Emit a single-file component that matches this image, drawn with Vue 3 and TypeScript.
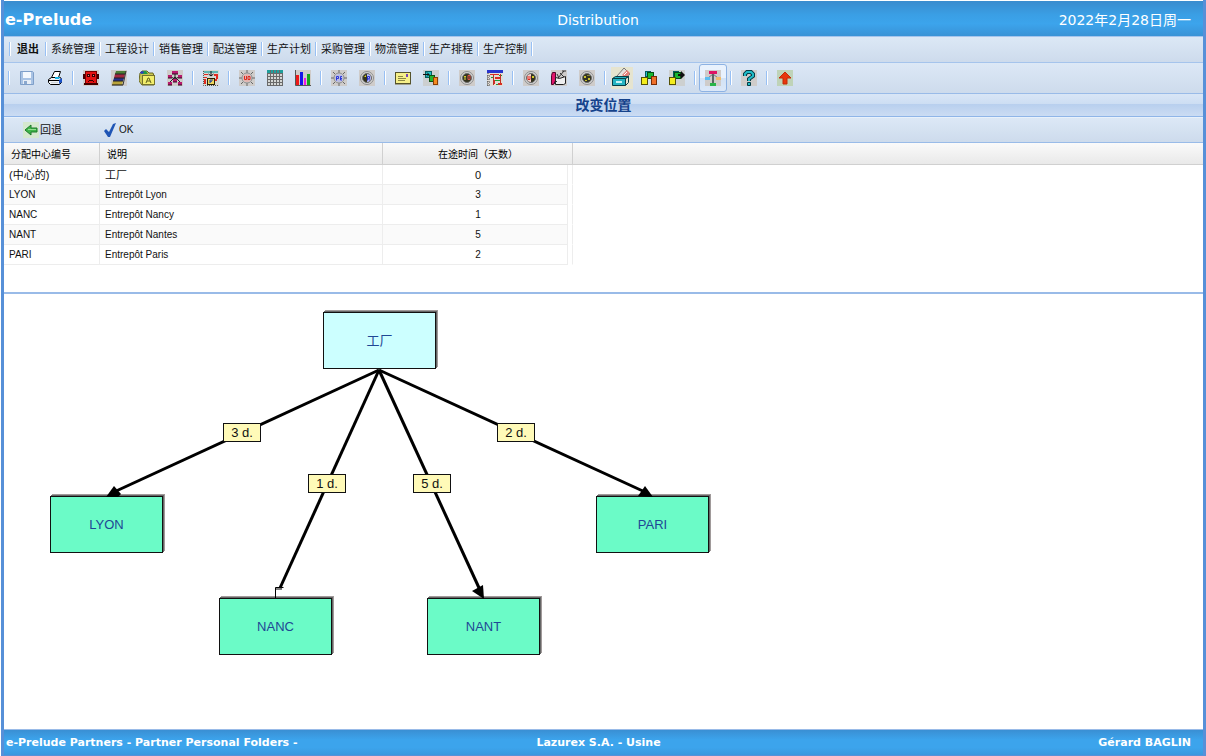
<script setup lang="ts">
interface Tool {
  name: string
  label: string
  art: string
  large?: boolean
  active?: boolean
}

interface Row {
  code: string
  label: string
  days: number
  lang: 'zh' | 'fr'
}

interface Site {
  code: string
  x: number
  y: number
  root?: boolean
}

interface Delay {
  text: string
  x: number
  y: number
}

const menus: string[] = ['退出', '系统管理', '工程设计', '销售管理', '配送管理', '生产计划', '采购管理', '物流管理', '生产排程', '生产控制']

const plate = '<rect width="16" height="16" fill="#cfccca"/>'
const gear = (inner: string): string =>
  plate +
  '<path d="M8 0v3M8 13v3M0 8h3M13 8h3M2 2l2 2M12 12l2 2M14 2l-2 2M4 12l-2 2" stroke="#666"/>' +
  '<circle cx="8" cy="8" r="5" fill="#dcdcdc" stroke="#8a8a8a"/>' + inner
const dial = (inner: string): string =>
  plate +
  '<circle cx="8" cy="8" r="6.500" fill="#d4d4d4" stroke="#8d8d8d"/><circle cx="8" cy="8" r="4.500" fill="#33331f" stroke="#6c6c6c"/>' +
  inner

const groups: Tool[][] = [
  [
    {
      name: 'save', label: '保存',
      art: '<path d="M1.500 1.500h12l1 1v12h-13z" fill="#a9c3e4" stroke="#7f9fc9"/><rect x="4" y="2" width="8" height="6" fill="#f4f8fd"/><rect x="4" y="10" width="8" height="4" fill="#e8eef6"/><rect x="5" y="11" width="3" height="3" fill="#8ba8ce"/>',
    },
    {
      name: 'print', label: '打印',
      art: '<path d="M4.500 7.500l3-6h6l-2 6z" fill="#fff" stroke="#000"/><path d="M1.500 9.500l3-2h9l1 2v3l-2 2h-9l-2-2z" fill="#eef1f4" stroke="#000"/><path d="M2 10.500h10" stroke="#000"/><path d="M4 12h7v1H4z" fill="#cfd6dc"/><path d="M8 7h5l-1 2H8z" fill="#19b6e8"/><path d="M12 10l3-2v4l-3 2z" fill="#1650c8"/>',
    },
  ],
  [
    {
      name: 'machine', label: '设备',
      art: plate + '<rect x="2.500" y="1.500" width="11" height="12" fill="#e31212" stroke="#700"/><path d="M0 4h2v5H0zM14 4h2v5h-2zM1 13h14v2H1z" fill="#400"/><path d="M4 4h3v3H4zM9 4h3v3H9zM6 10h4v1H6zM5 11h1v1H5zM10 11h1v1h-1z" fill="#3a0000"/><path d="M5 5h1v1H5zM10 5h1v1h-1z" fill="#e88"/>',
    },
    {
      name: 'books', label: '目录',
      art: plate + '<path d="M5 1h10l-1 3H4z" fill="#4b7d35"/><path d="M4 4h10l-1 4H3z" fill="#a32640"/><path d="M3 8h10l-1 3H2z" fill="#26318d"/><path d="M2 11h10l-1 4H1z" fill="#b9a33a"/><path d="M4 4h10M3 8h10M2 11h10" stroke="#222"/><path d="M15 1l-3 14" stroke="#333"/><path d="M1 15h11" stroke="#111"/>',
    },
    {
      name: 'folder', label: '文件夹',
      art: '<path d="M1 3l2-2h5l2 2h4l1 3v9H3L0 11z" fill="#c9c650" stroke="#6a6822"/><path d="M3 1h4l2 3H2z" fill="#239a42"/><path d="M1 2l3-1 1 2-3 1z" fill="#313bc4"/><rect x="3.500" y="5.500" width="12" height="9" fill="#f2ee6c" stroke="#76732c"/><path d="M7 13l2-5h1l2 5M8 11h3" stroke="#64641c"/>',
    },
    {
      name: 'structure', label: '结构',
      art: plate + '<path d="M8 3v9M3 12l5-5 5 5M4 7l4 2 4-2" stroke="#222"/><g fill="#b8186f"><rect x="5" y="1" width="6" height="3"/><rect x="1" y="5" width="4" height="3"/><rect x="11" y="5" width="4" height="3"/><rect x="1" y="12" width="4" height="3"/><rect x="11" y="12" width="4" height="3"/><rect x="6" y="9" width="4" height="3"/></g><path d="M5 4h6M1 8h4M11 8h4M6 12h4M1 15h4M11 15h4" stroke="#2d0a1f"/>',
    },
  ],
  [
    {
      name: 'scale', label: '配送',
      art: '<path d="M0 0h16v16H0z" fill="#d7d9d3"/><path d="M1 1h14v2H1z" fill="#5fb5b2"/><path d="M1 4h4v1H1zM1 7h3v1H1zM1 9h2v5H1zM11 4h4v2h-4zM13 6h2v3h-2zM12 9h2v2h-2z" fill="#e02b21"/><path d="M8 1v5M5.500 4L8 6l2.500-2" stroke="#111"/><path d="M.5 1v14.500H15" stroke="#555" stroke-dasharray="1 1"/><rect x="4.500" y="8.500" width="7" height="6" fill="#f1d65a" stroke="#2b2000"/><path d="M7 13v-3h3M7 12l2-1" stroke="#173ea5"/>',
    },
  ],
  [
    {
      name: 'gear-red', label: '需求',
      art: gear('<circle cx="8" cy="8" r="4" fill="#e3b3ae"/><path d="M5.500 6v3.500h2V6M9 6.500h2v3H9z" stroke="#dc2a20"/>'),
    },
    {
      name: 'grid', label: '表格',
      art: '<rect width="16" height="16" fill="#d5d7d5"/><path d="M0 0h16v3H0z" fill="#1f9f9c"/><path d="M.5 3v13M3.500 0v16M6.500 0v16M9.500 0v16M12.500 0v16M15.500 3v13M0 3.500h16M0 6.500h16M0 9.500h16M0 12.500h16M0 15.500h16" stroke="#6a6a6a"/>',
    },
    {
      name: 'chart', label: '图表',
      art: plate + '<path d="M1 5h3v10H1z" fill="#ed1919"/><path d="M5 2h3v13H5z" fill="#1414e8"/><path d="M9 8h2v7H9z" fill="#f016e6"/><path d="M12 4h3v11h-3z" fill="#15a51d"/><path d="M.5 0v15.500H16" stroke="#555"/>',
    },
  ],
  [
    {
      name: 'gear-blue', label: '采购',
      art: gear('<circle cx="8" cy="8" r="4" fill="#b9bbe2"/><path d="M5.500 10.500v-4h2v2h-2M11 6.500H9.500v3.500H11M9.500 8.500H11" stroke="#2b36d8"/>'),
    },
    {
      name: 'dial-blue', label: '订单',
      art: dial('<path d="M8 4a4 4 0 0 1 0 8z" fill="#b9bdf5"/><path d="M8.500 10.500v-4h2v2h-1l1 2" stroke="#2631d2"/><path d="M5 7l2-2v2z" fill="#e4db2b"/>'),
    },
  ],
  [
    {
      name: 'mail', label: '邮件',
      art: '<rect x=".5" y="2.500" width="15" height="11" fill="#f6f08a" stroke="#55532c"/><path d="M3 6.500h5M3 8.500h8M3 10.500h7" stroke="#8b8744"/><path d="M11 4h2v3h-2z" fill="#7a46b5"/><path d="M0 14.500h16" stroke="#a2a290"/>',
    },
    {
      name: 'flow', label: '物流',
      art: '<path d="M0 0h16v16H0z" fill="#cccfd0"/><rect x="2.500" y="1.500" width="6" height="6" fill="#23bfc4" stroke="#075c60"/><path d="M0 4.500h6M4 2.500l2 2-2 2" stroke="#111"/><rect x="6.500" y="5.500" width="5" height="6" fill="#27b32c" stroke="#0d5211"/><rect x="10.500" y="7.500" width="4" height="7" fill="#f58a1f" stroke="#8a3f05"/>',
    },
  ],
  [
    {
      name: 'dial-mixed', label: '排程',
      art: dial('<path d="M9 5.500h2v4H9z" stroke="#e05048"/><path d="M5 6h2v4H5z" fill="#8a8535"/><path d="M5 6h2v1H5z" fill="#d6cb2d"/>'),
    },
    {
      name: 'gantt', label: '甘特图',
      art: '<path d="M0 0h16v16H0z" fill="#e2ddd6"/><path d="M0 0h16v3H0z" fill="#2834cc"/><path d="M1 3v13M0 6h3M0 9h3M0 12h3M0 15h3" stroke="#444" stroke-dasharray="1 1"/><path d="M3 4h9v1H3zM8 7h5v2H8zM7 10h1v4H7zM11 13h4v2h-4z" fill="#d82d22"/><path d="M4 7h3v1H4zM12 5h3v1h-3zM8 10h6v1H8zM9 14h2v1H9z" fill="#1f9b38"/><path d="M6.500 5v10M13.500 4v9" stroke="#bf3026"/>',
    },
  ],
  [
    {
      name: 'dial-red', label: '控制',
      art: dial('<path d="M8 4a4 4 0 0 0 0 8z" fill="#f2d0cc"/><path d="M5 6v3.500h2V6" stroke="#e22a20"/><path d="M9 6h2v2H9z" fill="#d6cb2d"/>'),
    },
    {
      name: 'tools', label: '工具',
      art: plate + '<path d="M1.500 2.500h3v8l-2 4h-2v-9z" fill="#e0156a" stroke="#52062a"/><path d="M4.500 7.500l4 1 6-2v7l-2 1h-8z" fill="#eee" stroke="#222"/><path d="M7 8l6-7M9 3l4 4M6 4l2 4M11 1h4M3 14l3-3" stroke="#333"/>',
    },
    {
      name: 'dial-yellow', label: '仪表',
      art: dial('<path d="M5 6h2v2H5zM9 8h2v2H9zM6 10h2v1H6z" fill="#c9bf2d"/><path d="M8 5h3v1H8z" fill="#8a8535"/>'),
    },
  ],
  [
    {
      name: 'cards', label: '档案', large: true,
      art: '<path d="M0 0h22v22H0z" fill="#e6e4cf"/><path d="M6 9l7-8 6 6-6 5z" fill="#e4e0dd" stroke="#777"/><path d="M11 8l5-5 3 3-4 5z" fill="#e2807a"/><path d="M13 8l3-3" stroke="#fff"/><path d="M1.500 11.500l3-2h13l-3 2v7h-13z" fill="#26b4c2" stroke="#073f47"/><path d="M1.500 11.500h13l3-2v6l-3 3" stroke="#073f47"/><path d="M5 14h6v2H5z" fill="#c7f4f5"/>',
    },
    {
      name: 'blocks', label: '库存',
      art: '<rect x="4.500" y="1.500" width="5" height="5" fill="#23c0d0" stroke="#075c60"/><rect x="6.500" y="2.500" width="6" height="6" fill="#19b832" stroke="#064d11"/><rect x=".5" y="7.500" width="6" height="7" fill="#f3ec1e" stroke="#565206"/><rect x="10.500" y="6.500" width="5" height="8" fill="#ef702b" stroke="#7a2c06"/>',
    },
    {
      name: 'transfer', label: '转移',
      art: '<rect width="16" height="16" fill="#cdd0d0"/><rect x="4.500" y="1.500" width="5" height="5" fill="#23c0d0" stroke="#075c60"/><rect x="5.500" y="2.500" width="6" height="6" fill="#19b832" stroke="#064d11"/><rect x=".5" y="7.500" width="6" height="7" fill="#f3ec1e" stroke="#565206"/><path d="M9 5h4" stroke="#111" stroke-width="2"/><path d="M12 1l4 4-4 4z" fill="#111"/>',
    },
  ],
  [
    {
      name: 'network', label: '分配网络', active: true,
      art: plate + '<path d="M8 4l-5 4M8 4l5 4" stroke="#777"/><path d="M7 3h2v10H7z" fill="#5c6664"/><rect x="4" y="1" width="8" height="3" fill="#e01464"/><rect x="0" y="7" width="5" height="3" fill="#5cbcf0"/><rect x="11" y="7" width="5" height="3" fill="#f0bd6b"/><rect x="5" y="13" width="6" height="3" fill="#28b54a"/>',
    },
  ],
  [
    {
      name: 'help', label: '帮助',
      art: plate + '<path d="M4 6V4l2-2h4l2 2v2L8 9v2" stroke="#043c46" stroke-width="4"/><path d="M4 6V4l2-2h4l2 2v2L8 9v2" stroke="#20bdc9" stroke-width="2"/><path d="M6.500 12.500h3v3h-3z" fill="#20bdc9" stroke="#043c46"/>',
    },
  ],
  [
    {
      name: 'up', label: '上移',
      art: '<rect width="16" height="16" fill="#bfd3b8"/><path d="M8 2l6 6h-4v6H6V8H2z" fill="#e8350c" stroke="#c42a05"/>',
    },
  ],
]

const rows: Row[] = [
  { code: '(中心的)', label: '工厂', days: 0, lang: 'zh' },
  { code: 'LYON', label: 'Entrepôt Lyon', days: 3, lang: 'fr' },
  { code: 'NANC', label: 'Entrepôt Nancy', days: 1, lang: 'fr' },
  { code: 'NANT', label: 'Entrepôt Nantes', days: 5, lang: 'fr' },
  { code: 'PARI', label: 'Entrepôt Paris', days: 2, lang: 'fr' },
]

const sites: Site[] = [
  { code: '工厂', x: 319, y: 18, root: true },
  { code: 'LYON', x: 46, y: 202 },
  { code: 'NANC', x: 215, y: 304 },
  { code: 'NANT', x: 423, y: 304 },
  { code: 'PARI', x: 592, y: 202 },
]

const delays: Delay[] = [
  { text: '3 d.', x: 219, y: 129 },
  { text: '1 d.', x: 304, y: 180 },
  { text: '5 d.', x: 409, y: 180 },
  { text: '2 d.', x: 493, y: 129 },
]

const at = (p: { x: number; y: number }) => ({ left: `${p.x}px`, top: `${p.y}px` })
</script>

<template>
  <div class="app">
    <header class="banner">
      <strong class="brand">e-Prelude</strong>
      <span class="module">Distribution</span>
      <span class="date">2022年2月28日周一</span>
    </header>

    <nav class="menu">
      <i class="sep"></i>
      <template v-for="(m, i) in menus" :key="m">
        <button type="button" class="menu-item" :class="{ strong: i === 0 }">{{ m }}</button>
        <i class="sep"></i>
      </template>
    </nav>

    <div class="tools">
      <template v-for="(group, g) in groups" :key="g">
        <i class="sep"></i>
        <button
          v-for="t in group"
          :key="t.name"
          type="button"
          class="tool"
          :class="{ large: t.large, active: t.active }"
          :aria-label="t.label"
        >
          <svg :viewBox="t.large ? '0 0 22 22' : '0 0 16 16'" fill="none" v-html="t.art"></svg>
        </button>
      </template>
    </div>

    <h1 class="title">改变位置</h1>

    <div class="actions">
      <button type="button" class="action">
        <svg class="action-icon" viewBox="0 0 16 16">
          <rect width="16" height="16" fill="#d5e8cf" />
          <path d="M2 8l6-5v3h6v4H8v3z" fill="#3fb54a" stroke="#1c7a2a" />
          <path d="M5 7.500h8" stroke="#93dd92" />
        </svg>
        回退
      </button>
      <button type="button" class="action latin">
        <svg class="action-icon" viewBox="0 0 16 16">
          <path d="M2 9l2-2 3 3 4-8 3-1-6 14H6z" fill="#1f55b5" />
        </svg>
        OK
      </button>
    </div>

    <section class="list">
      <table>
        <colgroup>
          <col class="c-code" />
          <col class="c-label" />
          <col class="c-days" />
          <col class="c-gap" />
          <col />
        </colgroup>
        <thead>
          <tr>
            <th scope="col">分配中心编号</th>
            <th scope="col">说明</th>
            <th scope="col" colspan="2" class="num">在途时间（天数）</th>
            <td class="rest"></td>
          </tr>
        </thead>
        <tbody>
          <tr v-for="r in rows" :key="r.code" :class="{ latin: r.lang === 'fr' }">
            <td>{{ r.code }}</td>
            <td>{{ r.label }}</td>
            <td class="num">{{ r.days }}</td>
            <td class="gap"></td>
            <td class="rest"></td>
          </tr>
        </tbody>
      </table>
    </section>

    <main class="canvas">
      <div v-for="s in sites" :key="s.code" class="site" :class="{ root: s.root }" :style="at(s)">{{ s.code }}</div>
      <svg class="edges" aria-hidden="true">
        <g stroke="#000" stroke-width="3">
          <path d="M375 76L110 198" />
          <path d="M375 76L276 294" />
          <path d="M375 76L476 296" />
          <path d="M375 76L641 198" />
        </g>
        <path d="M271.500 304v-10.500h8M272 295h6" fill="none" stroke="#000" />
        <path d="M102 203l8-11 7 8-3 3z" />
        <path d="M480 305l-12-8 11-6z" />
        <path d="M649 203l-15-1 7-10z" />
      </svg>
      <div v-for="d in delays" :key="d.text" class="delay" :style="at(d)">{{ d.text }}</div>
    </main>

    <footer class="status">
      <span>e-Prelude Partners - Partner Personal Folders -</span>
      <span>Lazurex S.A. - Usine</span>
      <span class="end">Gérard BAGLIN</span>
    </footer>
  </div>
</template>

<style>
html,
body {
  margin: 0;
  background: #fff;
}
</style>

<style scoped>
.app {
  box-sizing: border-box;
  min-height: 100vh;
  display: flex;
  flex-direction: column;
  border: solid #5790d8;
  border-width: 0 3px 1px;
  margin-left: 1px;
  padding-top: 1px;
  font-family: "Liberation Sans", "Noto Sans CJK SC", sans-serif;
  font-size: 11px;
  color: #111;
}

button {
  margin: 0;
  padding: 0;
  border: 0;
  background: none;
  font: inherit;
  color: inherit;
}

.banner,
.status {
  display: grid;
  grid-template-columns: 1fr auto 1fr;
  align-items: center;
  color: #fff;
  font-family: "DejaVu Sans", "Noto Sans CJK SC", sans-serif;
}

.banner {
  height: 35px;
  padding: 2px 12px 0 1px;
  box-sizing: border-box;
  background: linear-gradient(#3a8cce, #3a9fe5 40%, #3ca4ec 65%, #3992d6);
  font-size: 14px;
  line-height: 20px;
}

.brand {
  font-size: 16px;
}

.date {
  text-align: right;
}

.menu,
.tools,
.actions {
  display: flex;
  align-items: center;
  box-sizing: border-box;
  padding-left: 2px;
  background: linear-gradient(#dce8f6, #cddbec);
  border-top: 1px solid #a5c4ec;
}

.menu {
  height: 26px;
  padding-bottom: 2px;
}

.tools {
  height: 31px;
  padding-left: 1px;
}

.sep {
  flex: none;
  width: 8px;
  height: 14px;
  background: linear-gradient(90deg, transparent 3px, #98c0f4 3px, #98c0f4 4px, #fff 4px, #fff 5px, transparent 5px);
}

.menu-item {
  width: 46px;
  white-space: nowrap;
  line-height: 16px;
}

.menu-item.strong {
  width: 28px;
  font-weight: bold;
}

.tool {
  flex: none;
  display: flex;
  align-items: center;
  justify-content: center;
  width: 28px;
  height: 28px;
  box-sizing: border-box;
}

.tool svg {
  width: 16px;
  height: 16px;
}

.tool.large {
  width: 26px;
}

.tool.large svg {
  width: 22px;
  height: 22px;
}

.tool.active {
  border: 1px solid #8db2e3;
  border-radius: 3px;
  background: linear-gradient(#e9f2fd 50%, #d2e2f5 50%, #dbe8f8);
}

.title {
  margin: 0;
  height: 24px;
  box-sizing: border-box;
  border-top: 1px solid #99bbe8;
  border-bottom: 1px solid #8fb5e8;
  background: linear-gradient(#d9e6f6, #cddef3 45%, #b8cfee 46%, #cbdcf3);
  color: #15428b;
  font-size: 14px;
  font-weight: bold;
  line-height: 22px;
  text-align: center;
}

.actions {
  height: 26px;
  padding-left: 19px;
  border-top-color: #e8f1fb;
  border-bottom: 1px solid #99bbe8;
}

.action {
  display: flex;
  align-items: center;
  gap: 1px;
  width: 79px;
  line-height: 16px;
}

.latin {
  font-size: 10px;
}

.action-icon {
  width: 16px;
  height: 16px;
}

.list {
  min-height: 151px;
  box-sizing: border-box;
  border-bottom: 2px solid #99bbe8;
}

table {
  width: 100%;
  table-layout: fixed;
  border-collapse: separate;
  border-spacing: 0;
}

.c-code {
  width: 96px;
}

.c-label {
  width: 283px;
}

.c-days {
  width: 185px;
}

.c-gap {
  width: 5px;
}

th,
td {
  box-sizing: border-box;
  height: 20px;
  padding: 0 5px;
  line-height: 16px;
  text-align: left;
  white-space: nowrap;
}

thead th,
thead td {
  height: 22px;
  padding: 2px 6px 0 7px;
  font-size: 10px;
  font-weight: normal;
  color: #000;
  background: linear-gradient(#fafafa, #e9e9e9);
  border-right: 1px solid #d0d0d0;
  border-bottom: 1px solid #d0d0d0;
}

thead .rest {
  border-right: 0;
}

tbody td {
  border-right: 1px solid #ededed;
  border-bottom: 1px solid #ededed;
}

tbody tr:nth-child(even) td {
  background: #fafafa;
}

tbody td.num {
  padding: 0 0 0 6px;
}

.num {
  text-align: center;
}

tbody td.gap {
  padding: 0;
  border-bottom-color: #fff;
}

tbody td.rest {
  border: 0;
}

tbody tr:nth-child(even) td.gap,
tbody tr:nth-child(even) td.rest {
  background: #fff;
}

.canvas {
  flex: 1;
  position: relative;
  min-height: 380px;
  overflow: hidden;
  background: #fff;
}

.edges {
  position: absolute;
  width: 100%;
  height: 100%;
}

.site,
.delay {
  position: absolute;
  box-sizing: border-box;
  border: 1px solid #111;
  text-align: center;
}

.site {
  width: 113px;
  height: 57px;
  background: #6bfbc7;
  box-shadow: 1px -1px 0 #666, 2px -2px 0 #a09a9a;
  color: #1f4795;
  font-size: 13px;
  line-height: 55px;
}

.site.root {
  background: #cff;
}

.delay {
  width: 38px;
  height: 19px;
  background: #fffab8;
  font-size: 13px;
  line-height: 18px;
}

.status {
  height: 26px;
  padding: 0 12px 0 2px;
  border-top: 1px solid #99bbe8;
  box-sizing: border-box;
  background: linear-gradient(#3a8fd3, #3ca4ec 40%, #3ca4ec 70%, #3a98de);
  font-size: 11px;
  font-weight: bold;
}

.end {
  text-align: right;
}
</style>
